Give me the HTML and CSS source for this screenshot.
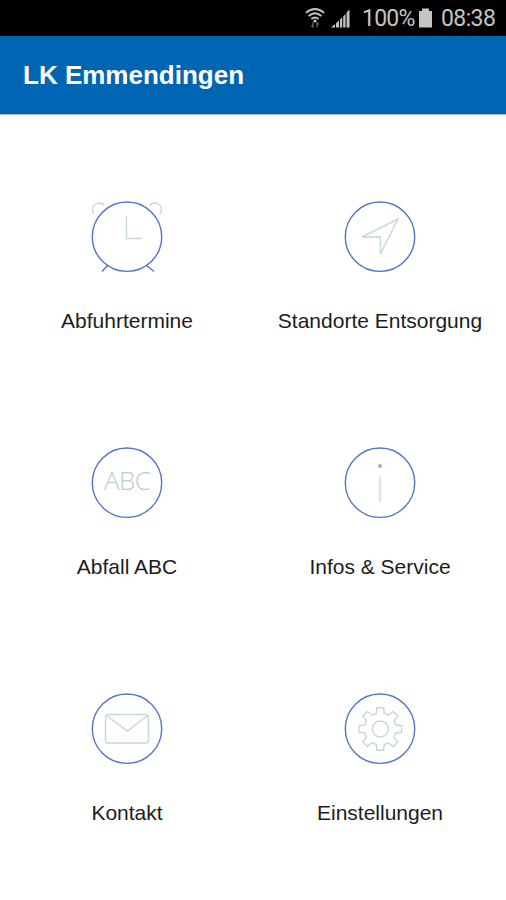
FILE: index.html
```html
<!DOCTYPE html>
<html lang="de">
<head>
<meta charset="utf-8">
<title>LK Emmendingen</title>
<link rel="stylesheet" href="styles.css">
</head>
<body>
<div class="status">
  <svg class="wifi" width="20" height="22" viewBox="0 0 20 22">
    <g fill="none" stroke="#c4c4c4" stroke-width="1.7">
      <path d="M0.8 5.8Q10 -1.8 19.2 5.8"/>
      <path d="M3.6 9Q10 3.5 16.4 9"/>
      <path d="M6.4 12Q10 9 13.6 12"/>
    </g>
    <circle cx="10" cy="14" r="1.6" fill="#c4c4c4"/>
    <path d="M8 15v5M6.5 18.500l1.500 2M12 20.500v-5M12 15.500l1.500 2" fill="none" stroke="#666" stroke-width="1.300"/>
  </svg>
  <svg class="signal" width="19" height="19" viewBox="0 0 19 19">
    <path d="M0 18.500L4 15V18.500ZM5 14.200L8 11.500V18.500H5ZM9 10.500L11.200 8.500V18.500H9ZM12.200 7.500L14.500 5V18.500H12.200ZM15.600 3.500L18.500 0.500V18.500H15.600Z" fill="#c4c4c4"/>
  </svg>
  <span class="percent">100%</span>
  <svg class="battery" width="15" height="20" viewBox="0 0 15 20">
    <path d="M4 0.500H11V3H14V19.500H1V3H4Z" fill="#c4c4c4"/>
  </svg>
  <span class="clock">08:38</span>
</div>
<header class="bar"><h1>LK Emmendingen</h1></header>
<main class="menu">
  <a class="item">
    <svg class="icon" viewBox="0 0 90 90">
      <path class="soft" d="M12 22A6.200 6.200 0 1 1 22.500 13.500M67.500 13.500A6.200 6.200 0 1 1 78 22M44.500 24.500V46.500H59.500"/>
      <circle class="ring" cx="45" cy="44.700" r="34.700"/>
      <path class="ring" d="M26 73L20 79.500M64 73L72 79.500"/>
    </svg>
    <span>Abfuhrtermine</span>
  </a>
  <a class="item">
    <svg class="icon" viewBox="0 0 90 90">
      <circle class="ring" cx="45" cy="44.700" r="34.700"/>
      <path class="soft" d="M63 27L27 45H45.500V62Z"/>
    </svg>
    <span>Standorte Entsorgung</span>
  </a>
  <a class="item">
    <svg class="icon" viewBox="0 0 90 90">
      <circle class="ring" cx="45" cy="44.700" r="34.700"/>
      <text class="abc" x="45.500" y="52.300" text-anchor="middle" textLength="47">ABC</text>
    </svg>
    <span>Abfall ABC</span>
  </a>
  <a class="item">
    <svg class="icon" viewBox="0 0 90 90">
      <circle class="ring" cx="45" cy="44.700" r="34.700"/>
      <circle class="dot" cx="45" cy="28" r="1.900"/>
      <path class="stem" d="M45 38.500V64"/>
    </svg>
    <span>Infos &amp; Service</span>
  </a>
  <a class="item">
    <svg class="icon" viewBox="0 0 90 90">
      <circle class="ring" cx="45" cy="44.700" r="34.700"/>
      <rect class="soft" x="23.500" y="30.500" width="43" height="28.500" rx="3"/>
      <path class="soft" d="M24.500 31.500L45.500 47L65.500 31.500"/>
    </svg>
    <span>Kontakt</span>
  </a>
  <a class="item">
    <svg class="icon" viewBox="0 0 90 90">
      <circle class="ring" cx="45" cy="44.700" r="34.700"/>
      <g transform="translate(45.300 45)">
        <path class="soft" d="M-4 -15.500L-3.300 -21.300H3.300L4 -15.500L8.100 -13.800L12.900 -17.500L17.500 -12.900L13.800 -8.100L15.500 -4L21.300 -3.300V3.300L15.500 4L13.800 8.100L17.500 12.900L12.900 17.500L8.100 13.800L4 15.500L3.300 21.300H-3.300L-4 15.500L-8.100 13.800L-12.900 17.500L-17.500 12.900L-13.800 8.100L-15.500 4L-21.300 3.300V-3.300L-15.500 -4L-13.800 -8.100L-17.500 -12.900L-12.900 -17.500L-8.100 -13.800Z"/>
        <circle class="soft" r="8"/>
      </g>
    </svg>
    <span>Einstellungen</span>
  </a>
</main>
</body>
</html>
```
FILE: styles.css
```css
* {
  box-sizing: border-box;
}

body {
  margin: 0;
  height: 900px;
  overflow: hidden;
  background: #fff;
  font-family: "Liberation Sans", Arial, sans-serif;
}

.status {
  height: 36px;
  padding-right: 11px;
  display: flex;
  align-items: center;
  justify-content: flex-end;
  background: #000;
  color: #c4c4c4;
  font: 23px/36px Roboto, sans-serif;
}

.wifi {
  margin-right: 6px;
}

.signal {
  margin-right: 12px;
}

.percent,
.clock {
  padding-top: 2px;
}

.percent {
  width: 54px;
  letter-spacing: -0.8px;
}

.battery {
  margin: 0 8px 0 2px;
}

.clock {
  width: 54px;
  letter-spacing: -0.6px;
}

.bar {
  height: 78px;
  padding-left: 23px;
  display: flex;
  align-items: center;
  background: #0066b3;
  box-shadow: 0 1px 1px #a9c3dc;
}

.bar h1 {
  margin: 0;
  color: #fff;
  font-size: 26px;
  line-height: 30px;
}

.menu {
  padding-top: 78px;
  display: grid;
  grid-template-columns: 254px 252px;
  grid-auto-rows: 246px;
}

.item {
  display: flex;
  flex-direction: column;
  align-items: center;
  color: #1c1c1c;
  font-size: 21px;
  line-height: 24px;
  white-space: nowrap;
}

.icon {
  width: 90px;
  height: 90px;
  margin-bottom: 27px;
}

.ring {
  fill: none;
  stroke: #5374c8;
  stroke-width: 1.4;
}

.soft {
  fill: none;
  stroke: #c6d9d4;
  stroke-width: 1.4;
}

.stem {
  stroke: #dce8e5;
  stroke-width: 2.6;
}

.dot {
  fill: #85b4dc;
}

.abc {
  fill: #b9cdd0;
  font: 300 26px "Open Sans", sans-serif;
}
```
